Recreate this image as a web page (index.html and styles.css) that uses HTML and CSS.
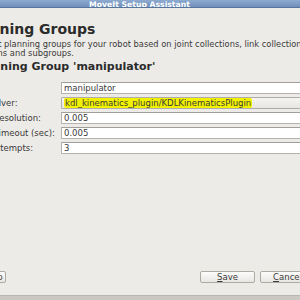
FILE: index.html
```html
<!DOCTYPE html>
<html lang="en">
<head>
  <meta charset="UTF-8" />
  <title>MoveIt Setup Assistant</title>
  <link rel="stylesheet" href="styles.css">
</head>
<body>

  <div class="window">
    <div class="titlebar">MoveIt Setup Assistant</div>

    <div class="page">
      <h1 class="title">Planning Groups</h1>
      <p class="desc">Create and edit planning groups for your robot based on joint collections, link collections,<br>kinematic chains and subgroups.</p>

      <h2 class="subtitle">Edit Planning Group 'manipulator'</h2>

      <div class="form">
        <label>Group Name:</label>
        <div class="field">manipulator</div>

        <label>Kinematic Solver:</label>
        <div class="field combo"><span class="mark">kdl_kinematics_plugin/KDLKinematicsPlugin</span></div>

        <label>Kin. Search Resolution:</label>
        <div class="field">0.005</div>

        <label>Kin. Search Timeout (sec):</label>
        <div class="field">0.005</div>

        <label>Kin. Solver Attempts:</label>
        <div class="field">3</div>
      </div>

      <div class="actions">
        <button class="wide">Delete Group</button>
        <div class="right">
          <button><u>S</u>ave</button>
          <button><u>C</u>ancel</button>
        </div>
      </div>
    </div>

    <div class="statusbar"></div>
  </div>

</body>
</html>
```

FILE: styles.css
```css
html, body {
  margin: 0;
  height: 300px;
  overflow: hidden;
  background-color: #edebe7;
}
body {
  font-family: "DejaVu Sans", sans-serif;
  color: #3a3a3a;
}
.window {
  width: 393px;
  height: 300px;
  margin-left: -57px;
  display: flex;
  flex-direction: column;
}
.titlebar {
  height: 8px;
  line-height: 9px;
  text-align: center;
  font-size: 7.7px;
  font-weight: bold;
  color: #fff;
  background: linear-gradient(#8eaad0, #6f8fb9);
  border-bottom: 1px solid #56749c;
  box-sizing: border-box;
  overflow: hidden;
}
.page {
  flex: 1;
  display: flex;
  flex-direction: column;
}
.title {
  margin: 13px 0 0 22px;
  font-size: 14px;
  line-height: 16px;
  color: #2b2b2b;
}
.desc {
  margin: 3px 0 0 -6px;
  font-size: 8.3px;
  line-height: 8.5px;
  white-space: nowrap;
}
.subtitle {
  margin: 4px 0 0 2px;
  font-size: 11px;
  line-height: 12px;
  color: #2b2b2b;
}
.form {
  margin-top: 9px;
  display: grid;
  grid-template-columns: 118px 1fr;
  row-gap: 3px;
  font-size: 8.5px;
}
.form label {
  line-height: 12px;
  white-space: nowrap;
}
.field {
  height: 12px;
  line-height: 10px;
  padding: 0 2px;
  box-sizing: border-box;
  background-color: #fff;
  border: 1px solid #b6b3ae;
  border-top-color: #a19e99;
  border-radius: 1px;
}
.field.combo {
  background: linear-gradient(#f5f4f2, #e7e5e1);
  border-color: #b0ada8;
}
.mark {
  background-color: #f2f200;
  border-radius: 2px;
  padding: 0 1px;
}
.actions {
  margin-top: auto;
  margin-bottom: 12px;
  display: flex;
  justify-content: space-between;
  padding-right: 21px;
}
.right {
  display: flex;
  gap: 5px;
}
button {
  width: 55px;
  height: 12px;
  padding: 0;
  font-family: "DejaVu Sans", sans-serif;
  font-size: 8.5px;
  line-height: 10px;
  color: #3a3a3a;
  background: linear-gradient(#fcfcfb, #e8e6e3);
  border: 1px solid #aeaaa4;
  border-radius: 2px;
}
button.wide {
  width: 63px;
}
.statusbar {
  height: 4px;
  background-color: #cbc8c3;
  border-top: 1px solid #b9b6b1;
}
```
